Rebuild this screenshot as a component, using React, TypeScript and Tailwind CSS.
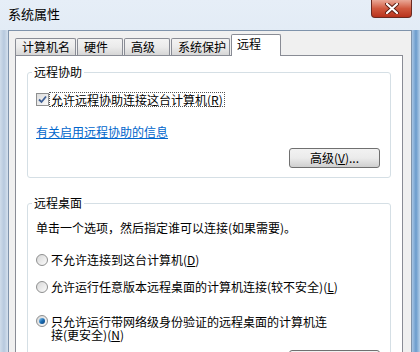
import React from "react";

// --- Abas da caixa de diálogo ---
const tabs = [
  { label: "计算机名", width: "w-[61px]" },
  { label: "硬件", width: "w-[46px]" },
  { label: "高级", width: "w-[46px]" },
  { label: "系统保护", width: "w-[59px]" },
];

const font = "font-['Noto_Sans_CJK_SC',sans-serif]";

const Key = ({ k }: { k: string }) => (
  <span>
    (<span className="underline">{k}</span>)
  </span>
);

const Radio = ({ checked }: { checked?: boolean }) => (
  <span className="w-[12px] h-[12px] shrink-0 rounded-full border border-[#8e8f8f] bg-gradient-to-br from-[#d8d8d8] to-[#fbfbfb] flex items-center justify-center">
    {checked && (
      <span className="w-[6px] h-[6px] rounded-full bg-gradient-to-br from-[#8fd0f5] via-[#1c6fb4] to-[#0c3f7a]" />
    )}
  </span>
);

const WinButton = ({ children }: { children?: React.ReactNode }) => (
  <button className="w-[91px] h-[20px] rounded-[3px] border border-[#707070] bg-gradient-to-b from-[#f2f2f2] via-[#ebebeb] to-[#cfcfcf] text-[12px] leading-[12px] text-black flex items-center justify-center">
    {children}
  </button>
);

const App = () => {
  return (
    <div
      className={`w-[420px] h-[352px] overflow-hidden flex flex-col bg-gradient-to-b from-[#e6eef7] via-[#d3e1ef] to-[#bcd1e8] ${font}`}
    >
      {/* Barra de título */}
      <div className="h-[30px] shrink-0 flex items-start justify-between pl-[8px] pr-[8px]">
        <span className="mt-[6px] text-[13px] leading-[16px] text-black">系统属性</span>
        <button className="w-[41px] h-[18px] rounded-b-[4px] border border-t-0 border-[#6b2a20] bg-gradient-to-b from-[#e9a897] via-[#d0593f] to-[#b8321c] flex items-center justify-center">
          <svg width="14" height="11" viewBox="0 0 14 11">
            <path
              d="M2 1 L12 10 M12 1 L2 10"
              stroke="#5a1d12"
              strokeWidth="4"
              strokeLinecap="round"
            />
            <path
              d="M2 1 L12 10 M12 1 L2 10"
              stroke="#ffffff"
              strokeWidth="2.2"
              strokeLinecap="round"
            />
          </svg>
        </button>
      </div>

      {/* Área cliente */}
      <div className="flex-1 flex">
        <div className="w-[8px] shrink-0 bg-gradient-to-r from-[#cfdcea] via-[#b7c9de] to-[#d5e1ee]" />
        <div className="flex-1 flex flex-col bg-[#f0f0f0] border-l border-r border-t border-[#7f93ab] pt-[3px] pl-[6px] pr-[8px]">
          {/* Abas */}
          <div className="h-[21px] flex items-end relative z-10">
            {tabs.map((t) => (
              <div
                key={t.label}
                className={`${t.width} h-[17px] mr-[1px] border border-b-0 border-[#898c95] rounded-t-[2px] bg-gradient-to-b from-[#f3f3f3] via-[#ebebeb] to-[#d6d6d6] pl-[6px] text-[12px] leading-[16px] text-black`}
              >
                {t.label}
              </div>
            ))}
            <div className="w-[50px] h-[22px] -mb-px border border-b-0 border-[#898c95] rounded-t-[2px] bg-white pl-[5px] text-[12px] leading-[18px] text-black">
              远程
            </div>
          </div>

          {/* Painel da aba */}
          <div className="flex-1 bg-white border border-[#898c95] px-[11px] pt-[16px]">
            {/* Grupo: 远程协助 */}
            <div className="relative border border-[#d5dfe5] rounded-[3px] pl-[8px] pr-[10px] pt-[19px] pb-[9px]">
              <span className="absolute left-[4px] -top-[8px] px-[2px] bg-white text-[12px] leading-[14px] text-black">
                远程协助
              </span>
              <div className="flex items-center h-[14px]">
                <span className="w-[13px] h-[13px] shrink-0 border border-[#8e8f8f] bg-gradient-to-br from-[#dcdcdc] to-[#fafafa] flex items-center justify-center">
                  <svg width="9" height="9" viewBox="0 0 9 9">
                    <path
                      d="M1 4.5 L3.5 7 L8 1.5"
                      fill="none"
                      stroke="#3e5f95"
                      strokeWidth="1.8"
                    />
                  </svg>
                </span>
                <span className="ml-[1px] px-[1px] outline outline-1 outline-dotted outline-[#555] text-[12px] leading-[13px] text-black">
                  允许远程协助连接这台计算机<Key k="R" />
                </span>
              </div>
              <div className="mt-[19px] h-[14px] text-[12px] leading-[14px] text-[#0066cc] underline">
                有关启用远程协助的信息
              </div>
              <div className="mt-[9px] flex justify-end">
                <WinButton>
                  高级<Key k="V" />...
                </WinButton>
              </div>
            </div>

            {/* Grupo: 远程桌面 */}
            <div className="relative mt-[25px] border border-[#d5dfe5] rounded-[3px] pl-[8px] pr-[10px] pt-[17px] h-[200px]">
              <span className="absolute left-[4px] -top-[8px] px-[2px] bg-white text-[12px] leading-[14px] text-black">
                远程桌面
              </span>
              <div className="h-[14px] text-[12px] leading-[14px] text-black">
                单击一个选项，然后指定谁可以连接(如果需要)。
              </div>
              <div className="mt-[18px] h-[14px] flex items-center gap-[3px] text-[12px] leading-[14px] text-black">
                <Radio />
                <span>
                  不允许连接到这台计算机<Key k="D" />
                </span>
              </div>
              <div className="mt-[13px] h-[14px] flex items-center gap-[3px] text-[12px] leading-[14px] text-black">
                <Radio />
                <span>
                  允许运行任意版本远程桌面的计算机连接(较不安全)<Key k="L" />
                </span>
              </div>
              <div className="mt-[20px] flex items-start gap-[3px] text-[12px] leading-[13px] text-black">
                <span className="mt-[1px]">
                  <Radio checked />
                </span>
                <span className="mt-[1px]">
                  只允许运行带网络级身份验证的远程桌面的计算机连
                  <br />
                  接(更安全)<Key k="N" />
                </span>
              </div>
              <div className="mt-[9px] flex justify-end">
                <WinButton />
              </div>
            </div>
          </div>
        </div>
        <div className="w-[8px] shrink-0 bg-gradient-to-r from-[#a9c6e4] via-[#6a9bcc] to-[#b5cfe8]" />
      </div>
    </div>
  );
};

export default App;
